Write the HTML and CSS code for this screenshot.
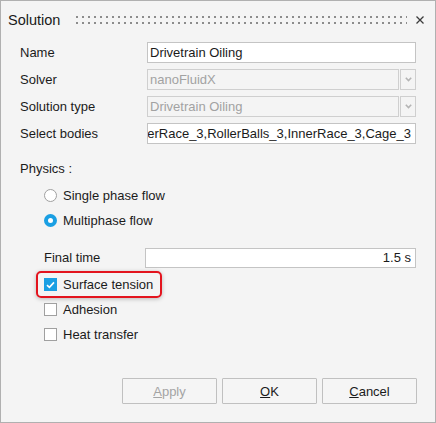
FILE: index.html
```html
<!DOCTYPE html>
<html lang="en">
<head>
    <meta charset="UTF-8">
    <title>Solution</title>
    <link rel="stylesheet" href="styles.css">
</head>
<body>

    <div class="dialog">
        <!-- Title bar -->
        <div class="titlebar">
            <span class="title">Solution</span>
            <span class="grip"></span>
            <svg class="close" width="8" height="8" viewBox="0 0 8 8">
                <path d="M0.5 0.5 L7.5 7.5 M7.5 0.5 L0.5 7.5" stroke="#3c3c3c" stroke-width="1.3" fill="none"/>
            </svg>
        </div>

        <!-- Main fields -->
        <div class="fields">
            <label class="field-label">Name</label>
            <input class="text-input" type="text" value="Drivetrain Oiling">

            <label class="field-label">Solver</label>
            <div class="combo">
                <div class="combo-value">nanoFluidX</div>
                <div class="combo-arrow">
                    <svg width="7" height="5" viewBox="0 0 7 5"><path d="M0.8 0.8 L3.5 3.5 L6.2 0.8" stroke="#b4b4b4" stroke-width="1.6" fill="none"/></svg>
                </div>
            </div>

            <label class="field-label">Solution type</label>
            <div class="combo">
                <div class="combo-value">Drivetrain Oiling</div>
                <div class="combo-arrow">
                    <svg width="7" height="5" viewBox="0 0 7 5"><path d="M0.8 0.8 L3.5 3.5 L6.2 0.8" stroke="#b4b4b4" stroke-width="1.6" fill="none"/></svg>
                </div>
            </div>

            <label class="field-label">Select bodies</label>
            <div class="text-box scrolled"><span>OuterRace_3,RollerBalls_3,InnerRace_3,Cage_3</span></div>
        </div>

        <div class="section-label">Physics :</div>

        <div class="options">
            <div class="option-row">
                <span class="radio"></span>
                <span>Single phase flow</span>
            </div>
            <div class="option-row">
                <span class="radio checked"></span>
                <span>Multiphase flow</span>
            </div>
        </div>

        <div class="time-row">
            <span class="time-label">Final time</span>
            <input class="text-input number" type="text" value="1.5 s">
        </div>

        <div class="checks">
            <div class="option-row">
                <span class="highlight">
                    <span class="checkbox checked">
                        <svg width="9" height="8" viewBox="0 0 9 8"><path d="M1 4.2 L3.4 6.4 L8 1.4" stroke="#fff" stroke-width="1.6" fill="none"/></svg>
                    </span>
                    <span>Surface tension</span>
                </span>
            </div>
            <div class="option-row">
                <span class="checkbox"></span>
                <span>Adhesion</span>
            </div>
            <div class="option-row">
                <span class="checkbox"></span>
                <span>Heat transfer</span>
            </div>
        </div>

        <!-- Buttons -->
        <div class="footer">
            <button class="btn" disabled><u>A</u>pply</button>
            <button class="btn"><u>O</u>K</button>
            <button class="btn"><u>C</u>ancel</button>
        </div>
    </div>

</body>
</html>
```

FILE: styles.css
```css
/* Global Styles */
* {
    margin: 0;
    padding: 0;
    box-sizing: border-box;
}

body {
    font-family: 'Liberation Sans', Arial, sans-serif;
    font-size: 13px;
    color: #1b1b1b;
    background: #f4f4f4;
}

/* Dialog frame */
.dialog {
    width: 436px;
    height: 423px;
    border: 1px solid #b0b0b0;
    background: #f4f4f4;
    display: flex;
    flex-direction: column;
}

.titlebar {
    height: 38px;
    display: flex;
    align-items: center;
    padding: 0 11px 0 7px;
}

.title {
    font-size: 14.5px;
    color: #1a1a1a;
}

.grip {
    flex-grow: 1;
    height: 8px;
    margin: 0 9px 0 16px;
    background-image: conic-gradient(at 2px 2px, transparent 75%, #8c8c8c 0);
    background-size: 6px 6px;
}

.close {
    display: block;
}

/* Name / solver grid */
.fields {
    display: grid;
    grid-template-columns: 127px 1fr;
    grid-auto-rows: 21px;
    row-gap: 6px;
    align-items: center;
    margin-top: 3px;
    padding: 0 19px;
}

.text-input,
.text-box {
    height: 21px;
    width: 100%;
    border: 1px solid #c4c4c4;
    background: #fff;
    font-family: inherit;
    font-size: 13px;
    color: #1b1b1b;
    padding: 0 2px;
    outline: none;
}

.text-box {
    display: flex;
    align-items: center;
    white-space: nowrap;
    overflow: hidden;
}

.scrolled {
    justify-content: flex-end;
    padding-right: 4px;
}

.combo {
    display: flex;
    height: 21px;
}

.combo-value {
    flex-grow: 1;
    display: flex;
    align-items: center;
    border: 1px solid #cfcfcf;
    padding: 0 2px;
    color: #a2a2a2;
}

.combo-arrow {
    width: 16px;
    margin-left: 1px;
    border: 1px solid #cfcfcf;
    display: flex;
    align-items: center;
    justify-content: center;
}

/* Physics section */
.section-label {
    margin-top: 15px;
    padding-left: 19px;
    line-height: 20px;
}

.options {
    margin-top: 4px;
    padding-left: 43px;
}

.option-row {
    height: 25px;
    display: flex;
    align-items: center;
    gap: 6px;
}

.radio {
    width: 13px;
    height: 13px;
    border-radius: 50%;
    border: 1px solid #a0a0a0;
    background: #fff;
}

.radio.checked {
    border: 4px solid #1a9fe3;
    background: #fff;
}

.time-row {
    margin-top: 12px;
    height: 25px;
    display: flex;
    align-items: center;
    padding: 0 19px 0 43px;
}

.time-label {
    width: 101px;
    flex-shrink: 0;
}

.time-row .text-input {
    height: 20px;
}

.number {
    text-align: right;
    padding-right: 4px;
}

.checks {
    margin-top: 2px;
    padding-left: 43px;
}

.checkbox {
    width: 13px;
    height: 13px;
    border: 1px solid #a0a0a0;
    background: #fff;
    display: flex;
    align-items: center;
    justify-content: center;
}

.checkbox.checked {
    background: #1a9fe3;
    border-color: #1a9fe3;
}

/* Red annotation around "Surface tension" */
.highlight {
    display: flex;
    align-items: center;
    gap: 6px;
    height: 27px;
    margin-left: -8px;
    padding: 0 7px 0 6px;
    border: 2px solid #e3141e;
    border-radius: 5px;
    box-shadow: 0 1px 4px rgba(0, 0, 0, 0.25);
}

/* Footer buttons */
.footer {
    margin-top: auto;
    display: flex;
    justify-content: flex-end;
    gap: 5px;
    padding: 0 18px 18px 0;
}

.btn {
    width: 95px;
    height: 26px;
    border: 1px solid #c0c0c0;
    border-radius: 1px;
    background: #f5f5f5;
    font-family: inherit;
    font-size: 13px;
    color: #1b1b1b;
}

.btn:disabled {
    color: #a4a4a4;
}
```
